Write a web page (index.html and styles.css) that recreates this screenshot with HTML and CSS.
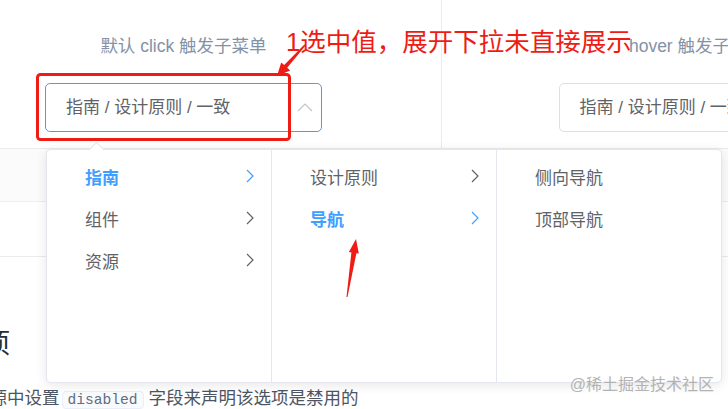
FILE: index.html
```html
<!DOCTYPE html>
<html lang="zh-CN">
<head>
    <meta charset="UTF-8">
    <meta name="viewport" content="width=device-width, initial-scale=1.0">
    <title>Cascader 级联选择器</title>
    <link rel="stylesheet" href="styles.css">
</head>
<body>
    <div class="page">
        <div class="content">
            <div class="demo-block">
                <div class="source">
                    <div class="block">
                        <span class="demonstration">默认 click 触发子菜单</span>
                        <div class="cascader">
                            <div class="cascader-input is-focus">
                                <span>指南 / 设计原则 / 一致</span>
                                <svg class="input-arrow" width="16" height="9" viewBox="0 0 16 9"><polyline points="1,8 8,1 15,8" fill="none" stroke="#c0c4cc" stroke-width="1.2"/></svg>
                            </div>
                            <div class="cascader-dropdown">
                                <div class="cascader-panel">
                                    <ul class="cascader-menu">
                                        <li class="node active">指南 <svg class="chevron" width="8" height="14" viewBox="0 0 8 14"><polyline points="1,1 7,7 1,13" fill="none" stroke="currentColor" stroke-width="1.2"/></svg></li>
                                        <li class="node">组件 <svg class="chevron" width="8" height="14" viewBox="0 0 8 14"><polyline points="1,1 7,7 1,13" fill="none" stroke="currentColor" stroke-width="1.2"/></svg></li>
                                        <li class="node">资源 <svg class="chevron" width="8" height="14" viewBox="0 0 8 14"><polyline points="1,1 7,7 1,13" fill="none" stroke="currentColor" stroke-width="1.2"/></svg></li>
                                    </ul>
                                    <ul class="cascader-menu">
                                        <li class="node">设计原则 <svg class="chevron" width="8" height="14" viewBox="0 0 8 14"><polyline points="1,1 7,7 1,13" fill="none" stroke="currentColor" stroke-width="1.2"/></svg></li>
                                        <li class="node active">导航 <svg class="chevron" width="8" height="14" viewBox="0 0 8 14"><polyline points="1,1 7,7 1,13" fill="none" stroke="currentColor" stroke-width="1.2"/></svg></li>
                                    </ul>
                                    <ul class="cascader-menu">
                                        <li class="node">侧向导航</li>
                                        <li class="node">顶部导航</li>
                                    </ul>
                                </div>
                            </div>
                        </div>
                    </div>
                    <div class="block">
                        <span class="demonstration">hover 触发子菜单</span>
                        <div class="cascader">
                            <div class="cascader-input">
                                <span>指南 / 设计原则 / 一致</span>
                                <svg class="input-arrow" width="16" height="9" viewBox="0 0 16 9"><polyline points="1,1 8,8 15,1" fill="none" stroke="#c0c4cc" stroke-width="1.2"/></svg>
                            </div>
                        </div>
                    </div>
                </div>
                <div class="meta"></div>
                <div class="demo-control"></div>
            </div>

            <h3>禁用选项</h3>
            <p>通过在数据源中设置<code>disabled</code> 字段来声明该选项是禁用的</p>
        </div>

        <!-- screenshot annotations -->
        <svg class="annotation" width="728" height="409" viewBox="0 0 728 409">
            <rect x="37.5" y="74.5" width="252" height="65" rx="3" fill="none" stroke="#ee1c14" stroke-width="3"/>
            <polygon points="277,76 290.2,70.4 287.2,67.7 305.6,45.5 304.4,44.5 284.2,65.1 281.2,62.4" fill="#ee1c14"/>
            <polygon points="356,239 358.8,253.6 356.4,253.2 347.5,297.1 346.5,296.9 351.4,252.4 348.9,252" fill="#ee1c14"/>
        </svg>
        <div class="annotation-text">1选中值，展开下拉未直接展示</div>
        <div class="watermark">@稀土掘金技术社区</div>
    </div>
</body>
</html>
```

FILE: styles.css
```css
* {
    box-sizing: border-box;
}

body {
    margin: 0;
    padding: 0;
    background: #fff;
    font-family: "Liberation Sans", "Noto Sans CJK SC", sans-serif;
}

.page {
    position: relative;
    width: 728px;
    height: 409px;
    overflow: hidden;
}

.content {
    width: 1050px;
    margin-left: -98px;
}

.demo-block {
    border-bottom: 1px solid #ebebeb;
}

.source {
    display: grid;
    grid-template-columns: 540px 510px;
    border-bottom: 1px solid #ebebeb;
}

.block {
    padding: 34px 0 16px 0;
    text-align: center;
}

.block:first-child {
    padding-left: 24px;
    border-right: 1px solid #ebebeb;
}

.demonstration {
    display: block;
    font-size: 17.5px;
    line-height: 24px;
    color: #8492a6;
    margin-bottom: 25px;
}

.cascader {
    position: relative;
    display: inline-block;
    vertical-align: top;
    text-align: left;
}

.cascader-input {
    display: flex;
    align-items: center;
    justify-content: space-between;
    width: 277px;
    height: 49px;
    padding: 0 8px 0 20px;
    border: 1px solid #dcdfe6;
    border-radius: 5px;
    font-size: 17px;
    line-height: 24px;
    color: #606266;
    white-space: nowrap;
}

.cascader-input.is-focus {
    border-color: #409eff;
}

.input-arrow {
    flex-shrink: 0;
}

.cascader-dropdown {
    position: absolute;
    top: 66px;
    left: 1px;
    width: 676px;
    height: 234px;
    background: #fff;
    border: 1px solid #e4e7ed;
    border-radius: 5px;
    box-shadow: 0 2px 12px rgba(0, 0, 0, 0.1);
    z-index: 2;
}

.cascader-dropdown::before {
    content: "";
    position: absolute;
    top: -6px;
    left: 44px;
    width: 10px;
    height: 10px;
    background: #fff;
    border-top: 1px solid #e4e7ed;
    border-left: 1px solid #e4e7ed;
    transform: rotate(45deg);
}

.cascader-panel {
    display: flex;
    height: 100%;
}

.cascader-menu {
    width: 225px;
    margin: 0;
    padding: 5px 0;
    list-style: none;
    border-right: 1px solid #e4e7ed;
}

.cascader-menu:last-child {
    border-right: none;
    flex: 1;
}

.node {
    display: flex;
    align-items: center;
    justify-content: space-between;
    height: 42px;
    padding: 0 17px 0 38px;
    font-size: 17px;
    color: #606266;
}

.node.active {
    color: #409eff;
    font-weight: bold;
}

.chevron {
    color: #606266;
}

.node.active .chevron {
    color: #409eff;
}

.meta {
    height: 52px;
    background: #fbfbfc;
}

.demo-control {
    height: 55px;
    border-top: 1px solid #eaeefb;
}

h3 {
    margin: 67px 0 0;
    font-size: 27px;
    font-weight: 400;
    line-height: 40px;
    color: #1f2f3d;
}

p {
    margin: 22px 0 0;
    font-size: 17.5px;
    line-height: 25px;
    color: #4d5562;
    white-space: nowrap;
}

code {
    margin-left: 2px;
    padding: 0 5px;
    font-family: "Liberation Mono", monospace;
    font-size: 14.6px;
    color: #5e6d82;
    background: #f9fafc;
    border: 1px solid #eaeefb;
    border-radius: 4px;
}

.annotation {
    position: absolute;
    top: 0;
    left: 0;
    z-index: 5;
}

.annotation-text {
    position: absolute;
    top: 27px;
    left: 286px;
    font-size: 25.5px;
    line-height: 30px;
    color: #ee1c14;
    white-space: nowrap;
    z-index: 5;
}

.watermark {
    position: absolute;
    right: 14px;
    top: 374px;
    font-size: 16px;
    line-height: 22px;
    color: #b3b3b3;
    z-index: 5;
}
```
